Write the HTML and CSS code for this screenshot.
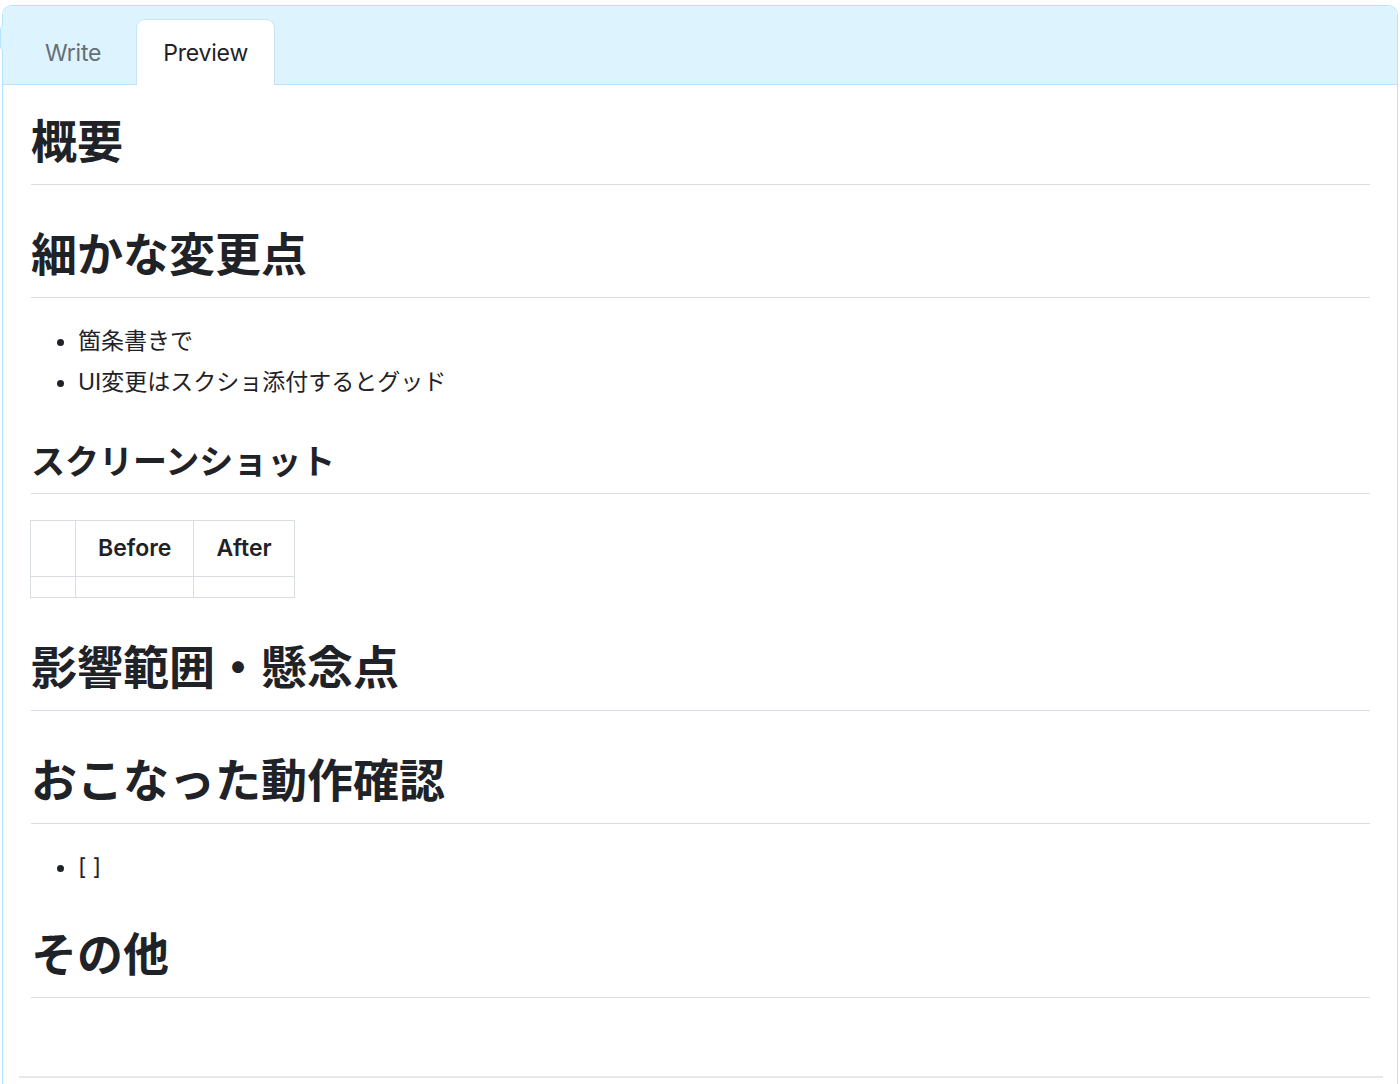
FILE: index.html
```html
<!DOCTYPE html>
<html lang="ja">
<head>
<meta charset="utf-8">
<title>Preview</title>
<link rel="stylesheet" href="styles.css">
</head>
<body>
<div class="comment">
  <div class="tabbar">
    <div class="tab">Write</div>
    <div class="tab selected">Preview</div>
  </div>
  <div class="markdown-body">
    <h1>概要</h1>
    <h1>細かな変更点</h1>
    <ul>
      <li>箇条書きで</li>
      <li>UI変更はスクショ添付するとグッド</li>
    </ul>
    <h2>スクリーンショット</h2>
    <table>
      <thead>
        <tr><th></th><th>Before</th><th>After</th></tr>
      </thead>
      <tbody>
        <tr><td></td><td></td><td></td></tr>
      </tbody>
    </table>
    <h1>影響範囲・懸念点</h1>
    <h1>おこなった動作確認</h1>
    <ul>
      <li>[ ]</li>
    </ul>
    <h1>その他</h1>
  </div>
  <div class="footer"></div>
</div>
</body>
</html>
```

FILE: styles.css
```css
html, body {
  margin: 0;
  padding: 0;
  background: #ffffff;
}

body {
  padding: 5px 2px 0 2px;
  font-family: "Inter", "Noto Sans CJK JP", sans-serif;
  color: #1f2328;
}

.comment {
  position: relative;
  border: 1px solid #b6e3ff;
  border-bottom: none;
  border-radius: 10px 10px 0 0;
  min-height: 1079px;
  box-sizing: border-box;
}

.comment::before {
  content: "";
  position: absolute;
  left: -3px;
  top: 20px;
  width: 5px;
  height: 24px;
  border-left: 1px solid #b6e3ff;
  border-radius: 4px 0 0 4px;
  background: #ddf4ff;
}

.tabbar {
  display: flex;
  align-items: flex-end;
  gap: 8px;
  height: 78px;
  padding: 0 0 0 15px;
  background: #ddf4ff;
  border-bottom: 1px solid #b6e3ff;
  border-radius: 10px 10px 0 0;
}

.tab {
  height: 65px;
  box-sizing: border-box;
  padding: 0 26px;
  display: flex;
  align-items: center;
  font-size: 23px;
  letter-spacing: -0.2px;
  color: #656d76;
  border: 1px solid transparent;
  border-bottom: none;
  border-radius: 9px 9px 0 0;
  margin-bottom: -1px;
}

.tab.selected {
  height: 66px;
  background: #ffffff;
  color: #1f2328;
  border-color: #c9e3f3;
}

.markdown-body {
  padding: 27px 27px 52px 28px;
  font-size: 23px;
  line-height: 35px;
}

.markdown-body h1,
.markdown-body h2 {
  font-weight: 700;
  margin: 40px 0 26px 0;
  border-bottom: 1px solid #d8dee4;
  color: #1f2328;
}

.markdown-body h1 {
  font-size: 46px;
  line-height: 58px;
  padding-bottom: 14px;
}

.markdown-body h2 {
  font-size: 34px;
  line-height: 43px;
  padding-bottom: 10px;
}

.markdown-body h1:first-child {
  margin-top: 0;
}

.markdown-body ul {
  margin: 0 0 26px 0;
  padding-left: 47px;
}

.markdown-body li + li {
  margin-top: 6px;
}

.markdown-body table {
  border-collapse: collapse;
  border-spacing: 0;
  margin: 1px 0 26px -1px;
}

.markdown-body th,
.markdown-body td {
  border: 1px solid #d8dee4;
  padding: 10px 22px;
}

.markdown-body th {
  font-weight: 600;
  height: 35px;
  box-sizing: content-box;
}

.markdown-body td {
  height: 0;
  line-height: 0;
}

.footer {
  margin: 0 14px 0 16px;
  border-top: 2px solid #e6e8ea;
}
```
